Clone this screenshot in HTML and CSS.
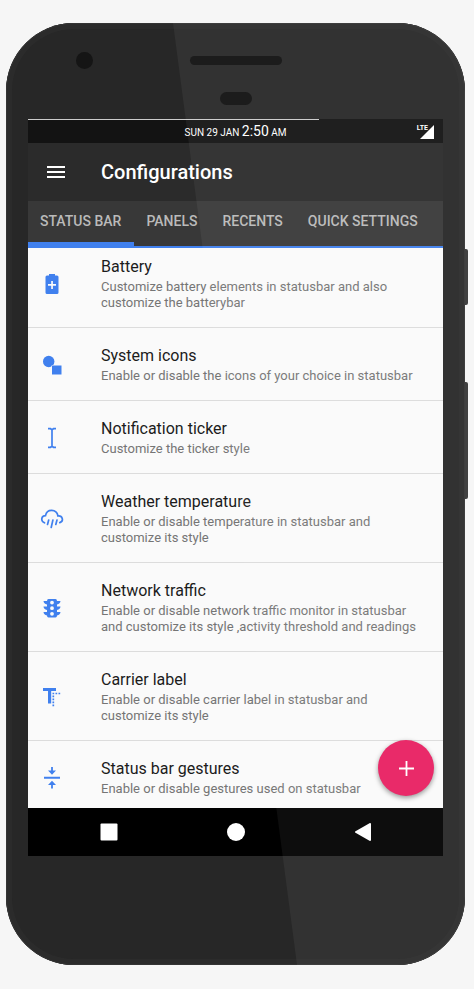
FILE: index.html
```html
<!DOCTYPE html>
<html lang="en">
<head>
<meta charset="utf-8">
<meta name="viewport" content="width=device-width, initial-scale=1">
<title>Configurations</title>
<link rel="stylesheet" href="styles.css">
</head>
<body>
<div class="phone">
  <span class="side-key side-key-power"></span>
  <span class="side-key side-key-volume"></span>
  <div class="bezel">
    <span class="camera"></span>
    <span class="speaker"></span>
    <span class="sensor"></span>
  </div>
  <main class="screen">
    <div class="status-bar">
      <span class="battery-line"></span>
      <p class="clock">SUN 29 JAN <span class="clock-time">2:50</span> AM</p>
      <div class="signal">
        <span class="signal-type">LTE</span>
        <svg class="signal-icon" viewBox="0 0 14 14"><path d="M14 0V14H0Z" fill="#fff"/></svg>
      </div>
    </div>
    <header class="app-bar">
      <button class="menu-button" type="button" aria-label="Menu">
        <svg class="menu-icon" viewBox="0 0 18 12"><path d="M0 1H18M0 6H18M0 11H18" stroke="#fff" stroke-width="2"/></svg>
      </button>
      <h1 class="app-title">Configurations</h1>
    </header>
    <nav class="tabs">
      <a class="tab tab-active" href="#status-bar">STATUS BAR</a>
      <a class="tab" href="#panels">PANELS</a>
      <a class="tab" href="#recents">RECENTS</a>
      <a class="tab" href="#quick-settings">QUICK SETTINGS</a>
    </nav>
    <div class="content">
      <ul class="list">
        <li class="row">
          <svg class="row-icon" viewBox="0 0 24 24"><path fill="#4080ee" fill-rule="evenodd" d="M7 3.500H9V2H15V3.500H17Q18.500 3.500 18.500 5V20.500Q18.500 22 17 22H7Q5.500 22 5.500 20.500V5Q5.500 3.500 7 3.500ZM11.200 9V12H8V13.700H11.200V17H12.900V13.700H16V12H12.900V9Z"/></svg>
          <div class="row-text"><h2 class="row-title">Battery</h2><p class="row-note">Customize battery elements in statusbar and also customize the batterybar</p></div>
        </li>
        <li class="row">
          <svg class="row-icon" viewBox="0 0 24 24"><g fill="#4080ee"><circle cx="8.700" cy="8.500" r="5.700"/><path d="M12 12.500H21.500V21.500H12Z" stroke="#fafafa" stroke-width="1" paint-order="stroke"/></g></svg>
          <div class="row-text"><h2 class="row-title">System icons</h2><p class="row-note">Enable or disable the icons of your choice in statusbar</p></div>
        </li>
        <li class="row">
          <svg class="row-icon" viewBox="0 0 24 24"><path fill="none" stroke="#4080ee" stroke-width="1.700" d="M8 2.700H10.500L12 3.700L13.500 2.700H16M8 21.300H10.500L12 20.300L13.500 21.300H16M12 3.500V20.500"/></svg>
          <div class="row-text"><h2 class="row-title">Notification ticker</h2><p class="row-note">Customize the ticker style</p></div>
        </li>
        <li class="row">
          <svg class="row-icon" viewBox="0 0 24 24"><g fill="none" stroke="#4080ee" stroke-width="1.700" stroke-linecap="round"><path d="M4.500 15.800C.300 14 1.200 8.700 5.500 8.600C7 1.600 16.500 1.700 18 9C22.500 8.500 24.200 14 19.800 15.600"/><path d="M8.700 13L7.500 17.500M12.900 13L11.200 20.500M17 13L15.800 17.500"/></g></svg>
          <div class="row-text"><h2 class="row-title">Weather temperature</h2><p class="row-note">Enable or disable temperature in statusbar and customize its style</p></div>
        </li>
        <li class="row">
          <svg class="row-icon" viewBox="0 0 24 24"><path fill="#4080ee" fill-rule="evenodd" d="M8.500 3H15.500Q17 3 17 5H20.500Q20.300 7.700 17 8.600V10.500H20.500Q20.300 13.200 17 14.100V16H20.500Q20.300 18.700 17 19.600Q17 21.500 15.500 21.500H8.500Q7 21.500 7 19.600Q3.700 18.700 3.500 16H7V14.100Q3.700 13.200 3.500 10.500H7V8.600Q3.700 7.700 3.500 5H7Q7 3 8.500 3ZM12 4.700A1.900 1.900 0 1 0 12 8.500A1.900 1.900 0 1 0 12 4.700ZM12 10.300A1.900 1.900 0 1 0 12 14.100A1.900 1.900 0 1 0 12 10.300ZM12 15.900A1.900 1.900 0 1 0 12 19.700A1.900 1.900 0 1 0 12 15.900Z"/></svg>
          <div class="row-text"><h2 class="row-title">Network traffic</h2><p class="row-note">Enable or disable network traffic monitor in statusbar and customize its style ,activity threshold and readings</p></div>
        </li>
        <li class="row">
          <svg class="row-icon" viewBox="0 0 24 24"><path fill="#4080ee" d="M3 3H16V6H11.200V18.500H8V6H3Z"/><path fill="none" stroke="#4080ee" stroke-width="1.700" stroke-dasharray="1.700 1.300" d="M12.500 8.500H21M13.300 10.500V22"/></svg>
          <div class="row-text"><h2 class="row-title">Carrier label</h2><p class="row-note">Enable or disable carrier label in statusbar and customize its style</p></div>
        </li>
        <li class="row row-last">
          <svg class="row-icon" viewBox="0 0 24 24"><path fill="#4080ee" d="M4 10.700H20V12.700H4ZM11.100 1H12.900V4.500H16L12 8.700L8 4.500H11.100ZM12 14.700L16 18.900H12.900V22.500H11.100V18.900H8Z"/></svg>
          <div class="row-text"><h2 class="row-title">Status bar gestures</h2><p class="row-note">Enable or disable gestures used on statusbar</p></div>
        </li>
      </ul>
      <button class="fab" type="button" aria-label="Add">
        <svg class="fab-icon" viewBox="0 0 15 15"><path d="M0 7.500H15M7.500 0V15" stroke="#fff" stroke-width="1.800"/></svg>
      </button>
    </div>
    <div class="nav-bar">
      <button class="nav-button" type="button" aria-label="Recent apps"><svg class="nav-icon" viewBox="0 0 18 18"><rect x=".5" y=".5" width="17" height="17" rx="1" fill="#fff"/></svg></button>
      <button class="nav-button" type="button" aria-label="Home"><svg class="nav-icon" viewBox="0 0 18 18"><circle cx="9" cy="9" r="9" fill="#fff"/></svg></button>
      <button class="nav-button" type="button" aria-label="Back"><svg class="nav-icon" viewBox="0 0 18 18"><path d="M16 1V17L2 9Z" fill="#fff" stroke="#fff" stroke-width="2" stroke-linejoin="round"/></svg></button>
    </div>
  </main>
  <span class="glare"></span>
</div>
</body>
</html>
```
FILE: styles.css
```css
* {
  box-sizing: border-box;
}

body {
  margin: 0;
  padding: 23px 9px 24px 6px;
  background: #f6f6f6;
  font-family: Roboto, "Liberation Sans", sans-serif;
}

h1, h2, p, ul {
  margin: 0;
  padding: 0;
  font-weight: 400;
}

svg {
  display: block;
}

button {
  display: grid;
  place-items: center;
  padding: 0;
  border: 0;
  background: none;
}

.phone {
  position: relative;
  padding: 0 22px 109px;
  border-radius: 68px;
  background: #272727;
  box-shadow: inset 0 0 0 1px #343434, inset 0 0 0 6px #2b2b2b;
}

.side-key {
  position: absolute;
  left: 100%;
  width: 3px;
  border-radius: 0 2px 2px 0;
  background: #414141;
}

.side-key-power {
  top: 226px;
  height: 56px;
}

.side-key-volume {
  top: 359px;
  height: 117px;
}

.bezel {
  display: grid;
  grid-template-columns: 1fr auto 1fr;
  align-items: center;
  row-gap: 23px;
  padding: 29px 0 14px;
}

.camera {
  width: 17px;
  height: 17px;
  margin-left: 48px;
  border-radius: 50%;
  background: #151515;
}

.speaker {
  width: 92px;
  height: 9px;
  border-radius: 5px;
  background: #101010;
}

.sensor {
  grid-column: 2;
  justify-self: center;
  width: 32px;
  height: 13px;
  border-radius: 7px;
  background: #101010;
}

.status-bar {
  position: relative;
  display: grid;
  grid-template-columns: 1fr auto 1fr;
  align-items: center;
  height: 24px;
  padding-right: 9px;
  padding-left: 9px;
  background: #131313;
  color: #fff;
}

.battery-line {
  position: absolute;
  top: 0;
  left: 0;
  width: 70%;
  height: 1px;
  background: #ccc;
}

.clock {
  grid-column: 2;
  font-size: 10px;
  line-height: 24px;
}

.clock-time {
  font-size: 14px;
}

.signal {
  display: flex;
  justify-self: end;
  align-items: flex-start;
}

.signal-type {
  margin-right: -8px;
  font-size: 7px;
  font-weight: 700;
  line-height: 6px;
}

.signal-icon {
  width: 14px;
  height: 14px;
}

.app-bar {
  display: flex;
  align-items: center;
  height: 58px;
  background: #2b2b2b;
  color: #fff;
}

.menu-button {
  width: 56px;
  height: 48px;
}

.menu-icon {
  width: 18px;
  height: 12px;
}

.app-title {
  margin-left: 17px;
  font-size: 20px;
  font-weight: 500;
}

.tabs {
  display: flex;
  height: 47px;
  border-bottom: 2px solid #4080ee;
  background: #383838;
}

.tab {
  padding: 0 13px 0 12px;
  color: #bababa;
  font-size: 14px;
  font-weight: 500;
  line-height: 41px;
  text-decoration: none;
  white-space: nowrap;
}

.tab-active {
  border-bottom: 4px solid #4080ee;
}

.content {
  position: relative;
  overflow: hidden;
  background: #fafafa;
}

.list {
  margin: -9px 0 -6px;
  list-style: none;
}

.row {
  display: flex;
  align-items: center;
  padding: 18px 16px 16px 12px;
  border-bottom: 1px solid #dcdcdc;
}

.row-last {
  border-bottom-color: transparent;
}

.row-icon {
  flex: none;
  width: 24px;
  height: 24px;
  margin-right: 37px;
}

.row-title {
  margin-bottom: 2px;
  color: #1c1c1c;
  font-size: 16px;
  line-height: 20px;
}

.row-note {
  color: #757575;
  font-size: 13px;
  line-height: 16px;
}

.fab {
  position: absolute;
  right: 9px;
  bottom: 12px;
  z-index: 1;
  width: 56px;
  height: 56px;
  border-radius: 50%;
  background: #e92a69;
  box-shadow: 0 2px 5px rgba(0, 0, 0, 0.4);
}

.fab-icon {
  width: 15px;
  height: 15px;
}

.nav-bar {
  display: grid;
  grid-template-columns: repeat(3, 1fr);
  height: 48px;
  padding: 0 17px;
  background: #000;
}

.nav-icon {
  width: 18px;
  height: 18px;
}

.glare {
  position: absolute;
  inset: 0;
  border-radius: 68px;
  background: rgba(255, 255, 255, 0.05);
  clip-path: polygon(167px 0, 100% 0, 100% 100%, 291px 100%);
  pointer-events: none;
}
```
